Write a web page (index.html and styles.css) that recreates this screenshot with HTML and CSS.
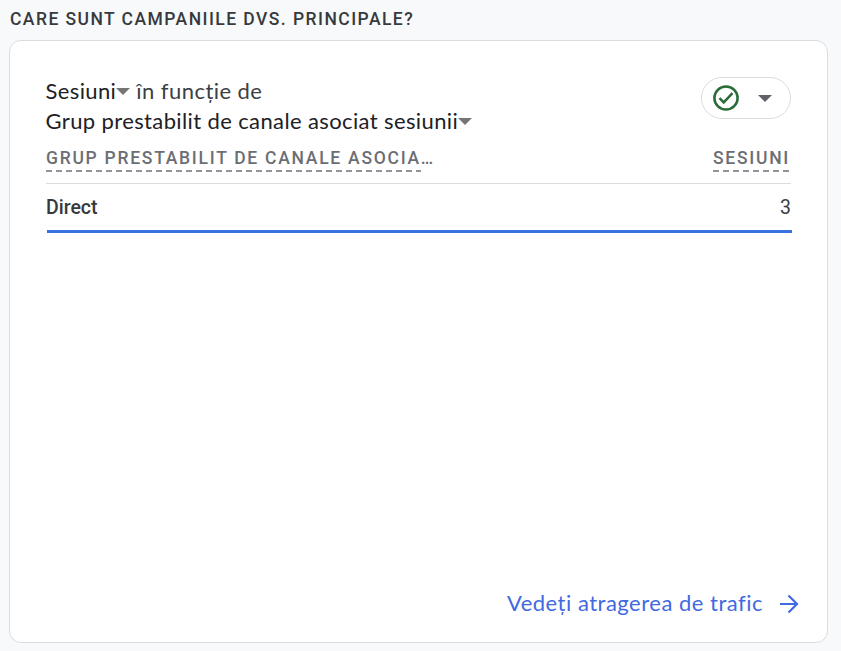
FILE: index.html
```html
<!DOCTYPE html>
<html lang="ro">
<head>
<meta charset="utf-8">
<title>Campanii</title>
<link rel="stylesheet" href="styles.css">
</head>
<body>
<h1 class="question">CARE SUNT CAMPANIILE DVS. PRINCIPALE?</h1>
<main class="card">
  <header class="head">
    <div class="titles">
      <div class="line"><span class="metric">Sesiuni</span><i class="caret"></i><span class="by">în funcție de</span></div>
      <div class="line"><span class="dimension">Grup prestabilit de canale asociat sesiunii</span><i class="caret"></i></div>
    </div>
    <button class="status" aria-label="Stare">
      <svg width="26" height="26" viewBox="0 0 26 26" fill="none" stroke="#2a6b38" stroke-width="2.5"><circle cx="13" cy="13" r="11.6"/><path d="M6.500 13.200l4.200 4.200 8.800-9.200"/></svg>
      <i class="caret small"></i>
    </button>
  </header>
  <div class="columns"><span class="col"><span class="dash">GRUP PRESTABILIT DE CANALE ASOCIA</span>…</span><span class="dash sessions">SESIUNI</span></div>
  <div class="row"><span class="name">Direct</span><span class="value">3</span></div>
  <div class="bar"></div>
  <a class="more"><span>Vedeți atragerea de trafic</span><svg width="20" height="20" viewBox="0 0 20 20" fill="none" stroke="#4169e1" stroke-width="2.2"><path d="M1 10h17M9.500 1.500l8.500 8.500-8.500 8.500"/></svg></a>
</main>
</body>
</html>
```
FILE: styles.css
```css
* { box-sizing: border-box; }
body { margin: 0; height: 651px; padding: 8px 13px 8px 9px; background: #f8f9fb; font-family: Roboto, sans-serif; color: #202124; overflow: hidden; }
.question { margin: 0 0 0 1px; height: 32px; font-size: 17.5px; line-height: 22px; font-weight: 500; letter-spacing: 1.45px; color: #37393d; white-space: nowrap; }
.card { height: 603px; background: #fff; border: 1px solid #dadce0; border-radius: 12px; padding: 35px 36px 0; display: flex; flex-direction: column; }
.head { display: flex; justify-content: space-between; height: 66px; }
.titles { margin-left: -0.5px; }
.line { display: flex; align-items: center; height: 30px; font: 22px/30px Lato, sans-serif; letter-spacing: 0.38px; white-space: nowrap; }
.caret { width: 0; height: 0; margin-top: 1px; border: 7px solid transparent; border-top-color: #757575; border-bottom: 0; }
.by { margin-left: 6px; letter-spacing: 0.45px; color: #3c4043; }
.status { width: 90px; height: 42px; margin: 1px 0 0; padding: 0 18px 0 11px; border: 1px solid #dadce0; border-radius: 21px; background: #fff; display: flex; align-items: center; justify-content: space-between; }
.small { margin-top: 0; border-top-color: #5f6368; }
.columns { height: 42px; padding-top: 5px; border-bottom: 1px solid #dadce0; display: flex; justify-content: space-between; align-items: flex-start; font-size: 17.5px; line-height: 22px; font-weight: 500; letter-spacing: 1.73px; color: #6b6e73; white-space: nowrap; }
.col { display: flex; }
.dash { height: 25px; background: repeating-linear-gradient(90deg, #909399 0 6px, transparent 6px 10px) left bottom / 100% 2px no-repeat; }
.sessions { margin-right: 1px; }
.row { height: 46px; display: flex; justify-content: space-between; align-items: center; font-size: 19.5px; color: #3c4043; }
.name { font-weight: 500; color: #37393d; }
.bar { height: 3px; margin: 0 -1px 0 1px; background: #3871e0; }
.more { margin: auto -8px 24px auto; display: flex; align-items: center; gap: 16px; color: #4169e1; font: 22px/30px Lato, sans-serif; letter-spacing: 0.5px; }
.more svg { position: relative; top: 1px; }
```
